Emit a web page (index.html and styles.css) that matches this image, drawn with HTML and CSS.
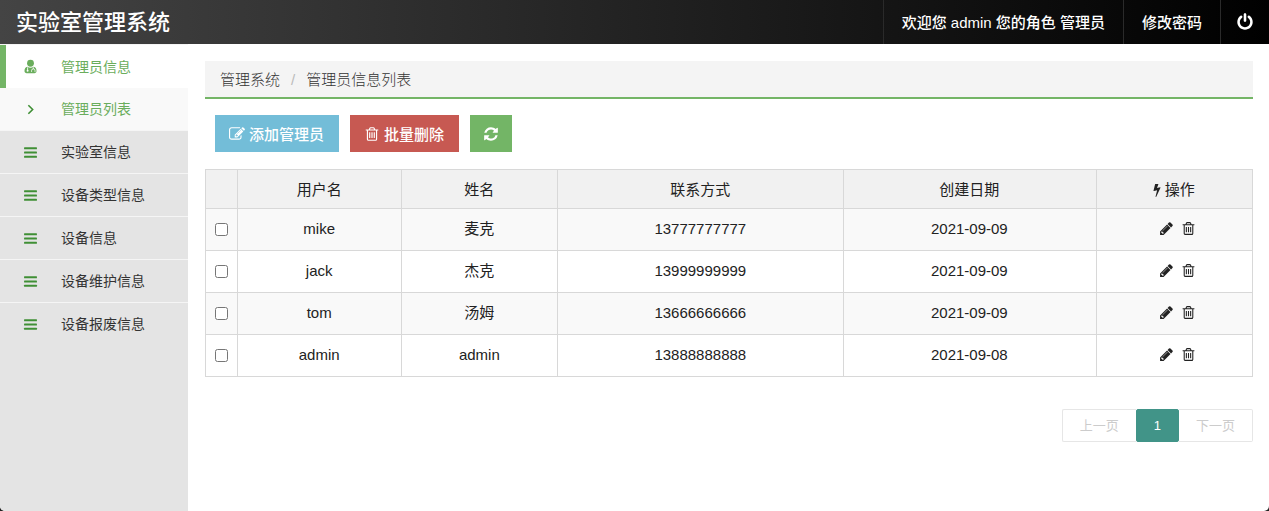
FILE: index.html
```html
<!DOCTYPE html>
<html lang="zh-CN">
<head>
    <meta charset="UTF-8">
    <meta name="viewport" content="width=device-width, initial-scale=1.0">
    <title>实验室管理系统</title>
    <link rel="stylesheet" href="styles.css">
</head>
<body>
    <!-- 图标 -->
    <svg class="icon-defs" aria-hidden="true">
        <symbol id="i-bars" viewBox="0 0 14 14"><rect x="1" y="2" width="12" height="2" rx=".5"/><rect x="1" y="6" width="12" height="2" rx=".5"/><rect x="1" y="10" width="12" height="2" rx=".5"/></symbol>
        <symbol id="i-angle" viewBox="0 0 14 14"><path d="M5 3l4 4-4 4" fill="none" stroke="currentColor" stroke-width="1.5"/></symbol>
        <symbol id="i-user" viewBox="1 0 12 14"><circle cx="7" cy="4" r="3.2"/><path d="M4.2 7.2C2 7.5 1.400 9.300 1.400 11.200 1.400 12.500 2.200 13.200 3.300 13.200h7.400c1.100 0 1.900-.7 1.900-2 0-1.900-.6-3.700-2.800-4-.8.6-1.700 1-2.800 1s-2-.4-2.800-1z"/><path d="M4.300 7.800v2.800M9.700 7.800v1.400M8 12v-1.200a1.600 1.600 0 0 1 3.200 0V12" fill="none" stroke="#fff" stroke-width=".8"/><circle cx="4.300" cy="11" r=".9" fill="#fff"/></symbol>
        <symbol id="i-power" viewBox="0 0 1792 1792"><path d="M1664 896q0 156-61 298t-164 245-245 164-298 61-298-61-245-164-164-245-61-298q0-182 80.500-343t226.500-270q43-32 95.500-25t83.500 50q32 42 24.500 94.500t-49.500 84.500q-98 74-151.500 181t-53.500 228q0 104 40.500 198.500t109.500 163.500 163.500 109.500 198.500 40.500 198.500-40.500 163.500-109.500 109.500-163.500 40.500-198.500q0-121-53.500-228t-151.500-181q-42-32-49.500-84.500t24.500-94.500q31-43 84-50t95 25q146 109 226.500 270t80.500 343zm-640-768v640q0 52-38 90t-90 38-90-38-38-90v-640q0-52 38-90t90-38 90 38 38 90z"/></symbol>
        <symbol id="i-edit" viewBox="0 0 1792 1792"><path d="M888 1184l116-116-152-152-116 116v56h96v96h56zm440-720q-16-16-33 1l-350 350q-17 17-1 33t33-1l350-350q17-17 1-33zm80 594v190q0 119-84.500 203.500t-203.500 84.500h-832q-119 0-203.500-84.500t-84.500-203.500v-832q0-119 84.500-203.500t203.500-84.500h832q63 0 117 25 15 7 18 23 3 17-9 29l-49 49q-14 14-32 8-23-6-45-6h-832q-66 0-113 47t-47 113v832q0 66 47 113t113 47h832q66 0 113-47t47-113v-126q0-13 9-22l64-64q15-15 35-7t20 29zm-96-738l288 288-672 672h-288v-288zm444 132l-92 92-288-288 92-92q28-28 68-28t68 28l152 152q28 28 28 68t-28 68z"/></symbol>
        <symbol id="i-trash" viewBox="0 0 1792 1792"><path d="M704 736v576q0 14-9 23t-23 9h-64q-14 0-23-9t-9-23v-576q0-14 9-23t23-9h64q14 0 23 9t9 23zm256 0v576q0 14-9 23t-23 9h-64q-14 0-23-9t-9-23v-576q0-14 9-23t23-9h64q14 0 23 9t9 23zm256 0v576q0 14-9 23t-23 9h-64q-14 0-23-9t-9-23v-576q0-14 9-23t23-9h64q14 0 23 9t9 23zm128 724v-948h-896v948q0 22 7 40.500t14.500 27 10.500 8.500h832q3 0 10.500-8.500t14.500-27 7-40.500zm-672-1076h448l-48-117q-7-9-17-11h-317q-10 2-17 11zm928 32v64q0 14-9 23t-23 9h-96v948q0 83-47 143.500t-113 60.500h-832q-66 0-113-58.500t-47-141.500v-952h-96q-14 0-23-9t-9-23v-64q0-14 9-23t23-9h309l70-167q15-37 54-63t79-26h320q40 0 79 26t54 63l70 167h309q14 0 23 9t9 23z"/></symbol>
        <symbol id="i-refresh" viewBox="0 0 1792 1792"><path d="M1639 1056q0 5-1 7-64 268-268 434.500t-478 166.500q-146 0-282.500-55t-243.500-157l-129 129q-19 19-45 19t-45-19-19-45v-448q0-26 19-45t45-19h448q26 0 45 19t19 45-19 45l-137 137q71 66 161 102t187 36q134 0 250-65t186-179q11-17 53-117 8-23 30-23h192q13 0 22.500 9.500t9.500 22.500zm25-800v448q0 26-19 45t-45 19h-448q-26 0-45-19t-19-45 19-45l138-138q-148-137-349-137-134 0-250 65t-186 179q-11 17-53 117-8 23-30 23h-199q-13 0-22.500-9.500t-9.500-22.500v-7q65-268 270-434.500t480-166.500q146 0 284 55.500t245 156.500l130-129q19-19 45-19t45 19 19 45z"/></symbol>
        <symbol id="i-bolt" viewBox="448 0 896 1792"><path d="M1333 566q18 20 7 44l-540 1157q-13 25-42 25-4 0-14-2-17-5-25.500-19t-4.500-30l197-808-406 101q-4 1-12 1-18 0-31-11-18-15-13-39l201-825q4-14 16-23t28-9h328q19 0 32 12.500t13 29.500q0 8-5 18l-171 463 396-98q8-2 12-2 19 0 34 15z"/></symbol>
        <symbol id="i-pencil" viewBox="0 0 1792 1792"><path d="M491 1536l91-91-235-235-91 91v107h128v128h107zm523-928q0-22-22-22-10 0-17 7l-542 542q-7 7-7 17 0 22 22 22 10 0 17-7l542-542q7-7 7-17zm-54-192l416 416-832 832h-416v-416zm683 96q0 53-37 90l-166 166-416-416 166-165q36-38 90-38 53 0 91 38l235 234q37 39 37 91z"/></symbol>
    </svg>

    <div class="page">
        <header class="navbar">
            <a class="brand" href="#">实验室管理系统</a>
            <nav class="user-nav">
                <a href="#">欢迎您 admin 您的角色 管理员</a>
                <a href="#">修改密码</a>
                <a href="#" aria-label="退出"><svg class="icon icon-power"><use href="#i-power"/></svg></a>
            </nav>
        </header>

        <div class="wrapper">
            <!-- 左侧菜单 -->
            <nav class="sidebar">
                <ul>
                    <li><a class="active" href="#"><svg class="icon"><use href="#i-user"/></svg>管理员信息</a></li>
                    <li><a class="sub" href="#"><svg class="icon"><use href="#i-angle"/></svg>管理员列表</a></li>
                    <li><a href="#"><svg class="icon"><use href="#i-bars"/></svg>实验室信息</a></li>
                    <li><a href="#"><svg class="icon"><use href="#i-bars"/></svg>设备类型信息</a></li>
                    <li><a href="#"><svg class="icon"><use href="#i-bars"/></svg>设备信息</a></li>
                    <li><a href="#"><svg class="icon"><use href="#i-bars"/></svg>设备维护信息</a></li>
                    <li><a href="#"><svg class="icon"><use href="#i-bars"/></svg>设备报废信息</a></li>
                </ul>
            </nav>

            <main class="content">
                <ol class="breadcrumb">
                    <li><a href="#">管理系统</a></li>
                    <li>管理员信息列表</li>
                </ol>

                <div class="toolbar">
                    <button type="button" class="btn btn-info"><svg class="icon"><use href="#i-edit"/></svg>添加管理员</button>
                    <button type="button" class="btn btn-danger"><svg class="icon"><use href="#i-trash"/></svg>批量删除</button>
                    <button type="button" class="btn btn-success" aria-label="刷新"><svg class="icon"><use href="#i-refresh"/></svg></button>
                </div>

                <table class="table">
                    <thead>
                        <tr>
                            <th class="col-check"></th>
                            <th class="col-user">用户名</th>
                            <th class="col-name">姓名</th>
                            <th class="col-phone">联系方式</th>
                            <th class="col-date">创建日期</th>
                            <th><div class="head-icon"><svg class="icon icon-bolt"><use href="#i-bolt"/></svg>操作</div></th>
                        </tr>
                    </thead>
                    <tbody>
                        <tr>
                            <td class="check"><input type="checkbox" aria-label="选择 mike"></td>
                            <td>mike</td>
                            <td>麦克</td>
                            <td>13777777777</td>
                            <td>2021-09-09</td>
                            <td><div class="actions"><a href="#" aria-label="编辑"><svg class="icon"><use href="#i-pencil"/></svg></a><a href="#" aria-label="删除"><svg class="icon"><use href="#i-trash"/></svg></a></div></td>
                        </tr>
                        <tr>
                            <td class="check"><input type="checkbox" aria-label="选择 jack"></td>
                            <td>jack</td>
                            <td>杰克</td>
                            <td>13999999999</td>
                            <td>2021-09-09</td>
                            <td><div class="actions"><a href="#" aria-label="编辑"><svg class="icon"><use href="#i-pencil"/></svg></a><a href="#" aria-label="删除"><svg class="icon"><use href="#i-trash"/></svg></a></div></td>
                        </tr>
                        <tr>
                            <td class="check"><input type="checkbox" aria-label="选择 tom"></td>
                            <td>tom</td>
                            <td>汤姆</td>
                            <td>13666666666</td>
                            <td>2021-09-09</td>
                            <td><div class="actions"><a href="#" aria-label="编辑"><svg class="icon"><use href="#i-pencil"/></svg></a><a href="#" aria-label="删除"><svg class="icon"><use href="#i-trash"/></svg></a></div></td>
                        </tr>
                        <tr>
                            <td class="check"><input type="checkbox" aria-label="选择 admin"></td>
                            <td>admin</td>
                            <td>admin</td>
                            <td>13888888888</td>
                            <td>2021-09-08</td>
                            <td><div class="actions"><a href="#" aria-label="编辑"><svg class="icon"><use href="#i-pencil"/></svg></a><a href="#" aria-label="删除"><svg class="icon"><use href="#i-trash"/></svg></a></div></td>
                        </tr>
                    </tbody>
                </table>

                <!-- 分页 -->
                <nav class="pager">
                    <a class="prev" href="#">上一页</a>
                    <a class="current" href="#">1</a>
                    <a class="next" href="#">下一页</a>
                </nav>
            </main>
        </div>
    </div>
</body>
</html>
```
FILE: styles.css
```css
* {
    box-sizing: border-box;
}
html {
    background: #222;
}
body {
    margin: 0;
    font-family: "Liberation Sans", "Noto Sans CJK SC", sans-serif;
    font-size: 15px;
    line-height: 22px;
    color: #222;
}
a {
    color: inherit;
    text-decoration: none;
}
ul, ol {
    list-style: none;
    margin: 0;
    padding: 0;
}
.icon-defs {
    display: none;
}
.icon {
    width: 14px;
    height: 14px;
    fill: currentColor;
    flex-shrink: 0;
}
.page {
    display: flex;
    flex-direction: column;
    min-height: 100vh;
    background: #fff;
    border-radius: 0 0 5px 5px;
    overflow: hidden;
}

/* 顶部导航 */
.navbar {
    display: flex;
    justify-content: space-between;
    height: 44px;
    background: linear-gradient(to right, #444, #000);
    color: #fff;
}
.brand {
    padding: 0 16px;
    font-size: 22px;
    font-weight: 500;
    line-height: 46px;
}
.user-nav {
    display: flex;
}
.user-nav a {
    display: flex;
    align-items: center;
    padding: 1px 18px 0;
    border-left: 1px solid #2a2a2a;
    font-weight: 500;
}
.user-nav .icon-power {
    width: 18px;
    height: 18px;
}
.user-nav a:last-child {
    padding: 0 15px;
}

/* 左侧菜单 */
.wrapper {
    display: flex;
    flex: 1;
}
.sidebar {
    width: 188px;
    flex-shrink: 0;
    border-top: 1px solid #f5f5f5;
    background: #e4e4e4;
    font-size: 14px;
}
.sidebar a {
    display: flex;
    align-items: center;
    gap: 23px;
    height: 43px;
    padding-left: 23px;
    border-bottom: 1px solid #f5f5f5;
    color: #333;
}
.sidebar li:last-child a {
    border-bottom-color: transparent;
}
.sidebar .icon {
    width: 15px;
    height: 15px;
    color: #3f8f35;
}
.sidebar .active {
    padding-left: 17px;
    border-left: 6px solid #74b566;
    border-bottom: 0;
    background: #fff;
    color: #6aad5c;
}
.sidebar .active .icon {
    color: #6aad5c;
}
.sidebar .sub {
    background: #f9f9f9;
    color: #6aad5c;
}

/* 内容 */
.content {
    flex: 1;
    padding: 17px 16px 17px 17px;
}
.breadcrumb {
    display: flex;
    height: 38px;
    padding: 0 15px;
    border-bottom: 2px solid #74b566;
    background: #f4f4f4;
    line-height: 38px;
    font-weight: 300;
    color: #333;
}
.breadcrumb li + li::before {
    content: "/";
    padding: 0 11px;
    color: #bbb;
}
.toolbar {
    display: flex;
    gap: 11px;
    padding: 16px 10px 17px;
}
.btn {
    display: flex;
    align-items: center;
    gap: 4px;
    height: 37px;
    padding: 0 15px 0 14px;
    border: 0;
    color: #fff;
    font-family: inherit;
    font-size: 15px;
    font-weight: 500;
    cursor: pointer;
}
.btn .icon {
    width: 16px;
    height: 16px;
}
.btn-info {
    background: #73bdd8;
}
.btn-danger {
    background: #c75952;
}
.btn-success {
    padding: 0 13px;
    background: #73b566;
}

.table {
    width: 100%;
    table-layout: fixed;
    border-collapse: collapse;
    text-align: center;
}
.table th,
.table td {
    height: 42px;
    padding: 0 1px 2px 0;
    border: 1px solid #d8d8d8;
}
.table th {
    height: 39px;
    padding: 1px 1px 0 0;
    background: #f1f1f1;
    font-weight: 400;
}
.table tbody tr:nth-child(odd) {
    background: #f9f9f9;
}
.table .check {
    padding-bottom: 0;
}
.table input {
    display: block;
    width: 13px;
    height: 13px;
    margin: 0 auto;
}
.head-icon {
    display: flex;
    align-items: center;
    justify-content: center;
    gap: 4px;
}
.table .icon-bolt {
    width: 8px;
}
.col-check {
    width: 32px;
}
.col-user {
    width: 15.7%;
}
.col-name {
    width: 14.9%;
}
.col-phone {
    width: 27.3%;
}
.col-date {
    width: 24.1%;
}
.actions {
    display: flex;
    justify-content: center;
    gap: 7px;
    padding-left: 8px;
}
.actions a {
    display: flex;
}
.actions .icon {
    width: 15px;
    height: 15px;
}

.pager {
    display: flex;
    justify-content: flex-end;
    margin-top: 32px;
    font-size: 13px;
    line-height: 31px;
}
.pager a {
    padding: 0 17px;
    border: 1px solid #e6e6e6;
    color: #ccc;
}
.pager .prev {
    border-right: 0;
    border-radius: 2px 0 0 2px;
}
.pager .next {
    border-left: 0;
    border-radius: 0 2px 2px 0;
}
.pager .current {
    border-color: #419488;
    border-radius: 2px;
    background: #419488;
    color: #fff;
}
```
